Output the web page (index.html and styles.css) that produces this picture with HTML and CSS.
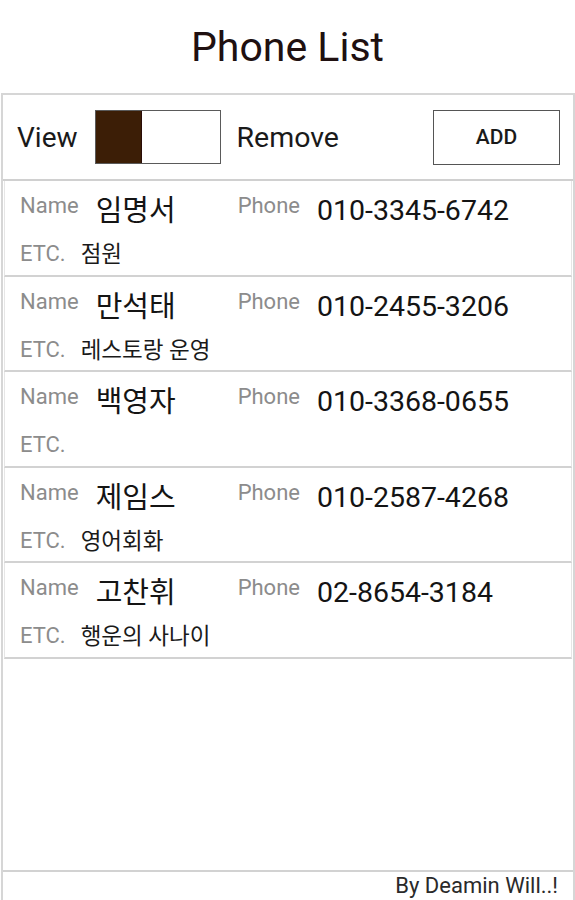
FILE: index.html
```html
<!DOCTYPE html>
<html lang="ko">
<head>
  <meta charset="UTF-8" />
  <meta name="viewport" content="width=device-width, initial-scale=1.0"/>
  <title>Phone List</title>
  <link rel="stylesheet" href="styles.css">
</head>
<body>
  <h1 class="title">Phone List</h1>

  <div class="box">
    <div class="toolbar">
      <span class="tool-label">View</span>
      <div class="switch"><span class="switch-thumb"></span></div>
      <span class="tool-label remove">Remove</span>
      <button class="add-btn" type="button">ADD</button>
    </div>

    <div class="list">
      <div class="row">
        <div class="line">
          <span class="label">Name</span><span class="name">임명서</span>
          <span class="label">Phone</span><span class="phone">010-3345-6742</span>
        </div>
        <div class="line etc">
          <span class="label">ETC.</span><span class="memo">점원</span>
        </div>
      </div>
      <div class="row">
        <div class="line">
          <span class="label">Name</span><span class="name">만석태</span>
          <span class="label">Phone</span><span class="phone">010-2455-3206</span>
        </div>
        <div class="line etc">
          <span class="label">ETC.</span><span class="memo">레스토랑 운영</span>
        </div>
      </div>
      <div class="row">
        <div class="line">
          <span class="label">Name</span><span class="name">백영자</span>
          <span class="label">Phone</span><span class="phone">010-3368-0655</span>
        </div>
        <div class="line etc">
          <span class="label">ETC.</span><span class="memo"></span>
        </div>
      </div>
      <div class="row">
        <div class="line">
          <span class="label">Name</span><span class="name">제임스</span>
          <span class="label">Phone</span><span class="phone">010-2587-4268</span>
        </div>
        <div class="line etc">
          <span class="label">ETC.</span><span class="memo">영어회화</span>
        </div>
      </div>
      <div class="row">
        <div class="line">
          <span class="label">Name</span><span class="name">고찬휘</span>
          <span class="label">Phone</span><span class="phone">02-8654-3184</span>
        </div>
        <div class="line etc">
          <span class="label">ETC.</span><span class="memo">행운의 사나이</span>
        </div>
      </div>
    </div>

    <div class="footer">By Deamin Will..!</div>
  </div>
</body>
</html>
```

FILE: styles.css
```css
html, body { margin: 0; height: 100%; }
body {
  font-family: Roboto, "Noto Sans CJK KR", sans-serif;
  background: #fff; color: #1a1a1a;
  display: flex; flex-direction: column;
}

.title {
  margin: 0; height: 93px; box-sizing: border-box; padding-top: 27px;
  text-align: center; font-size: 41px; line-height: 41px; font-weight: 400; color: #201010;
}

.box {
  flex: 1; display: flex; flex-direction: column;
  margin-left: 1px; border: 2px solid #d6d6d6; border-bottom: none;
}

.toolbar {
  height: 84px; display: flex; align-items: center;
  padding: 0 13px 0 14px; border-bottom: 2px solid #d0d0d0;
}
.tool-label { font-size: 28px; color: #1a1a1a; }
.switch {
  width: 124px; height: 52px; margin-left: 17px; display: flex;
  border: 1.5px solid #5a5a5a; background: #fff;
}
.switch-thumb { width: 45px; background: #3c1e06; border-right: 1.5px solid #2a0c08; }
.remove { margin-left: 16px; font-size: 28.5px; }
.add-btn {
  margin-left: auto; width: 127px; height: 55px; padding: 0;
  background: #fff; border: 1.5px solid #555; border-radius: 0;
  font-family: Roboto, sans-serif; font-size: 21px; font-weight: 500; color: #1a1a1a;
}

.list { flex: 1; padding: 0 1px; }
.row {
  height: 93.5px; box-sizing: content-box; padding-left: 15px;
  border: 1px solid #e6e6e6; border-top: none; border-bottom: 2px solid #d2d2d2;
}
.line { display: flex; align-items: flex-start; padding-top: 14px; }
.label { font-size: 22px; line-height: 22px; color: #8c8c8c; margin-right: 17px; }
.name { width: 142px; margin-top: 2px; font-size: 29px; line-height: 28px; color: #141414; }
.phone { margin-top: 2px; font-size: 28.5px; line-height: 28px; color: #141414; }
.etc { padding-top: 18px; }
.etc .label { margin-right: 15px; }
.memo { font-size: 22.5px; line-height: 22px; color: #1a1a1a; }

.footer {
  height: 28px; border-top: 2px solid #d2d2d2; padding-right: 15px;
  text-align: right; font-size: 22px; line-height: 28px; color: #2a2a2a;
}
```
